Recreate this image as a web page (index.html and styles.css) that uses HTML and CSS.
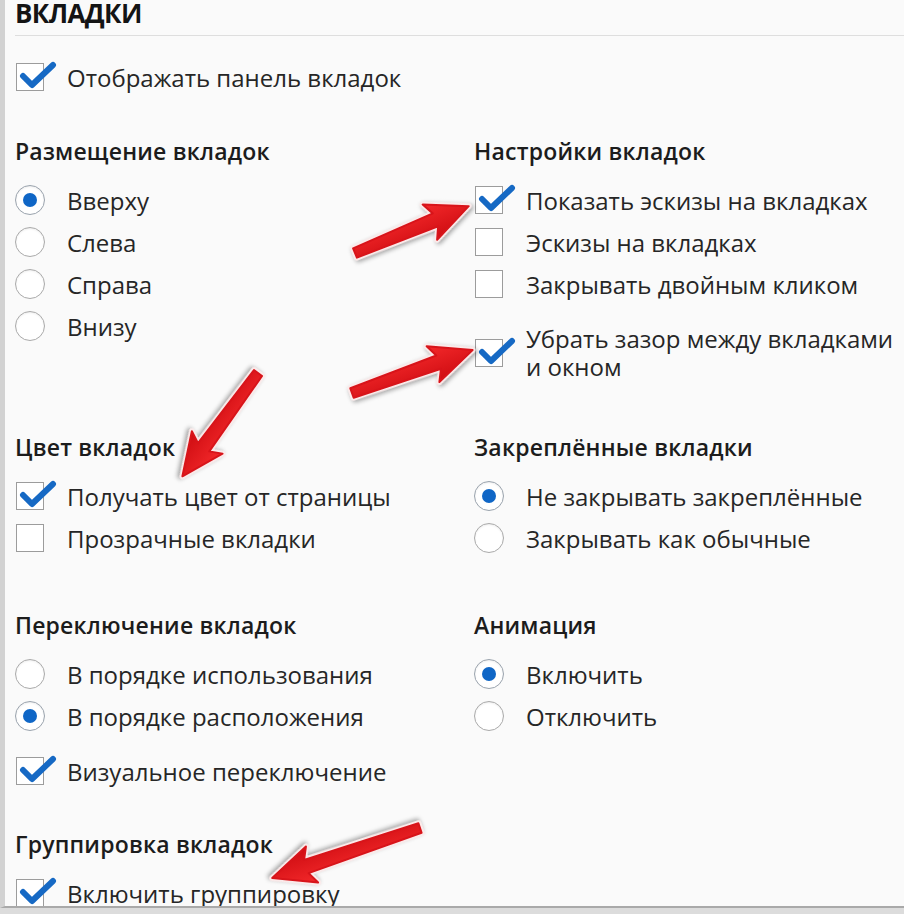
FILE: index.html
```html
<!DOCTYPE html>
<html lang="ru">
<head>
    <meta charset="UTF-8">
    <meta name="viewport" content="width=device-width, initial-scale=1.0">
    <title>Вкладки</title>
    <link rel="stylesheet" href="styles.css">
</head>
<body>

    <svg class="defs" width="0" height="0">
        <symbol id="check" viewBox="0 0 40 30">
            <path d="M6 15 L15 24 L36 4" fill="none" stroke="#1669c4" stroke-width="6" stroke-linecap="round" stroke-linejoin="round"/>
        </symbol>
    </svg>

    <div class="page">
        <div class="page-head">
            <h1>ВКЛАДКИ</h1>
        </div>

        <label class="option option-top">
            <span class="box checked"><svg><use href="#check"/></svg></span>
            Отображать панель вкладок
        </label>

        <div class="row row-first">
            <section class="group">
                <h2>Размещение вкладок</h2>
                <label class="option"><span class="radio checked"></span>Вверху</label>
                <label class="option"><span class="radio"></span>Слева</label>
                <label class="option"><span class="radio"></span>Справа</label>
                <label class="option"><span class="radio"></span>Внизу</label>
            </section>
            <section class="group">
                <h2>Настройки вкладок</h2>
                <label class="option"><span class="box checked"><svg><use href="#check"/></svg></span>Показать эскизы на вкладках</label>
                <label class="option"><span class="box"></span>Эскизы на вкладках</label>
                <label class="option"><span class="box"></span>Закрывать двойным кликом</label>
                <label class="option option-wrap"><span class="box checked"><svg><use href="#check"/></svg></span><span>Убрать зазор между вкладками<br>и окном</span></label>
            </section>
        </div>

        <div class="row">
            <section class="group">
                <h2>Цвет вкладок</h2>
                <label class="option"><span class="box checked"><svg><use href="#check"/></svg></span>Получать цвет от страницы</label>
                <label class="option"><span class="box"></span>Прозрачные вкладки</label>
            </section>
            <section class="group">
                <h2>Закреплённые вкладки</h2>
                <label class="option"><span class="radio checked"></span>Не закрывать закреплённые</label>
                <label class="option"><span class="radio"></span>Закрывать как обычные</label>
            </section>
        </div>

        <div class="row">
            <section class="group">
                <h2>Переключение вкладок</h2>
                <label class="option"><span class="radio"></span>В порядке использования</label>
                <label class="option"><span class="radio checked"></span>В порядке расположения</label>
                <label class="option option-spaced"><span class="box checked"><svg><use href="#check"/></svg></span>Визуальное переключение</label>
            </section>
            <section class="group">
                <h2>Анимация</h2>
                <label class="option"><span class="radio checked"></span>Включить</label>
                <label class="option"><span class="radio"></span>Отключить</label>
            </section>
        </div>

        <div class="row row-last">
            <section class="group">
                <h2>Группировка вкладок</h2>
                <label class="option"><span class="box checked"><svg><use href="#check"/></svg></span>Включить группировку</label>
            </section>
        </div>

        <!-- red pointers drawn over the screenshot -->
        <svg class="arrows" width="904" height="914" viewBox="0 0 904 914">
            <defs>
                <linearGradient id="red" x1="0" y1="0" x2="0" y2="1">
                    <stop offset="0" stop-color="#f3282a"/>
                    <stop offset="1" stop-color="#cf0d12"/>
                </linearGradient>
                <path id="arrow-short" d="M0 -5 L87 -7 L81 -19 L123 0 L81 19 L87 7 L0 5 Z"/>
                <path id="arrow-mid" d="M0 -5 L92 -7 L86 -19 L128 0 L86 19 L92 7 L0 5 Z"/>
                <path id="arrow-long" d="M0 -5 L120 -7 L114 -19 L156 0 L114 19 L120 7 L0 5 Z"/>
            </defs>
            <g transform="translate(355 253) rotate(-22.4)">
                <use class="arrow-halo" href="#arrow-short"/>
                <use class="arrow-body" href="#arrow-short"/>
            </g>
            <g transform="translate(352 393) rotate(-19.6)">
                <use class="arrow-halo" href="#arrow-mid"/>
                <use class="arrow-body" href="#arrow-mid"/>
            </g>
            <g transform="translate(258 373) rotate(126.2)">
                <use class="arrow-halo" href="#arrow-mid"/>
                <use class="arrow-body" href="#arrow-mid"/>
            </g>
            <g transform="translate(420 828) rotate(161.3)">
                <use class="arrow-halo" href="#arrow-long"/>
                <use class="arrow-body" href="#arrow-long"/>
            </g>
        </svg>
    </div>

</body>
</html>
```

FILE: styles.css
```css
body {
    margin: 0;
    background-color: #dcdcdc;
    font-family: 'Open Sans', 'Noto Sans', sans-serif;
    color: #262626;
}

.defs {
    position: absolute;
}

.page {
    position: relative;
    height: 906px;
    overflow: hidden;
    padding-left: 10px;
    background-color: #fafafa;
    border-left: 5px solid #d2d2d2;
    border-bottom: 2px solid #a9a9a9;
}

.page-head {
    padding-bottom: 8px;
    border-bottom: 1px solid #dedede;
}

.page-head h1 {
    margin: 0;
    font-size: 26px;
    line-height: 27px;
    font-weight: 700;
    letter-spacing: -0.6px;
    color: #141414;
}

h2 {
    margin: 0 0 8px;
    font-size: 23px;
    line-height: 40px;
    font-weight: 600;
    letter-spacing: 0.2px;
    color: #1c1c1c;
}

.row {
    display: grid;
    grid-template-columns: 459px 1fr;
    margin-top: 46px;
}

.row-first {
    margin-top: 33px;
}

.row-last {
    margin-top: 32px;
}

.option {
    display: flex;
    align-items: center;
    gap: 22px;
    height: 42px;
    font-size: 24px;
    white-space: nowrap;
}

.option-top {
    margin-top: 20px;
}

.option-spaced {
    margin-top: 13px;
}

.option-wrap {
    height: 56px;
    margin-top: 20px;
    line-height: 28px;
}

.box {
    position: relative;
    flex: none;
    width: 28px;
    height: 28px;
    margin: 0 1px;
    border: 1px solid #9c9c9c;
    background-color: #fff;
    box-sizing: border-box;
}

.box svg {
    position: absolute;
    left: 0;
    top: -3px;
    width: 40px;
    height: 30px;
    overflow: visible;
}

.radio {
    position: relative;
    flex: none;
    width: 30px;
    height: 30px;
    border: 1px solid #aaaaaa;
    border-radius: 50%;
    background-color: #fff;
    box-sizing: border-box;
    box-shadow: inset 0 1px 2px rgba(0, 0, 0, 0.08);
}

.radio.checked {
    border-color: #9aa3ad;
}

.radio.checked::after {
    content: '';
    position: absolute;
    left: 7px;
    top: 7px;
    width: 14px;
    height: 14px;
    border-radius: 50%;
    background-color: #0f66c6;
}

.arrows {
    position: absolute;
    left: -5px;
    top: 0;
    pointer-events: none;
}

.arrow-halo {
    fill: #fff;
    stroke: #fbeaea;
    stroke-width: 6;
    stroke-linejoin: round;
    filter: drop-shadow(1px 2px 2px rgba(0, 0, 0, 0.35));
}

.arrow-body {
    fill: url(#red);
    stroke: #d8141a;
    stroke-width: 2;
    stroke-linejoin: round;
}
```
